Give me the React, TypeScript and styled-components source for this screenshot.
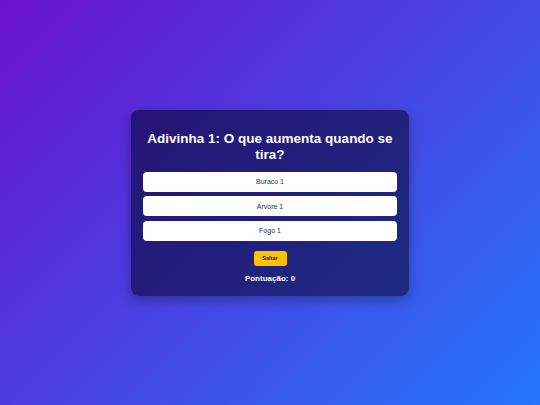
import React from 'react';
import styled, { createGlobalStyle } from 'styled-components';

const GlobalStyle = createGlobalStyle`
  html, body {
    margin: 0;
    padding: 0;
    height: 100%;
  }
  body {
    font-family: "Liberation Sans", Arial, sans-serif;
    background: linear-gradient(135deg, #6a11cb 0%, #2575fc 100%);
    background-attachment: fixed;
  }
  #root {
    height: 100%;
  }
`;

const Page = styled.div`
  height: 405px;
  display: flex;
  align-items: center;
  justify-content: center;
`;

const Card = styled.div`
  width: 278px;
  box-sizing: border-box;
  padding: 21px 12px 13px;
  border-radius: 8px;
  background: linear-gradient(135deg, rgba(30, 15, 100, 0.85), rgba(25, 35, 110, 0.85));
  box-shadow: 0 4px 12px rgba(0, 0, 0, 0.3);
  text-align: center;
  color: #fff;
`;

const Title = styled.h2`
  margin: 0 0 9px;
  font-size: 13.5px;
  line-height: 16px;
  font-weight: bold;
`;

const Options = styled.div`
  display: flex;
  flex-direction: column;
  gap: 4.5px;
`;

const Option = styled.button`
  height: 20px;
  border: none;
  border-radius: 4px;
  background: #fff;
  color: #333;
  font-family: "Liberation Sans", Arial, sans-serif;
  font-size: 7px;
  cursor: pointer;
`;

const SkipButton = styled.button`
  margin-top: 10px;
  width: 33px;
  height: 15px;
  border: none;
  border-radius: 3px;
  background: #ffc107;
  color: #222;
  font-family: "Liberation Sans", Arial, sans-serif;
  font-size: 5.5px;
  font-weight: bold;
  cursor: pointer;
`;

const Score = styled.p`
  margin: 8px 0 0;
  font-size: 8px;
  font-weight: bold;
`;

const options = ['Buraco 1', 'Árvore 1', 'Fogo 1'];

const App: React.FC = () => (
  <>
    <GlobalStyle />
    <Page>
      <Card>
        <Title>Adivinha 1: O que aumenta quando se tira?</Title>
        <Options>
          {options.map((o) => (
            <Option key={o}>{o}</Option>
          ))}
        </Options>
        <SkipButton>Saltar</SkipButton>
        <Score>Pontuação: 0</Score>
      </Card>
    </Page>
  </>
);

export default App;
